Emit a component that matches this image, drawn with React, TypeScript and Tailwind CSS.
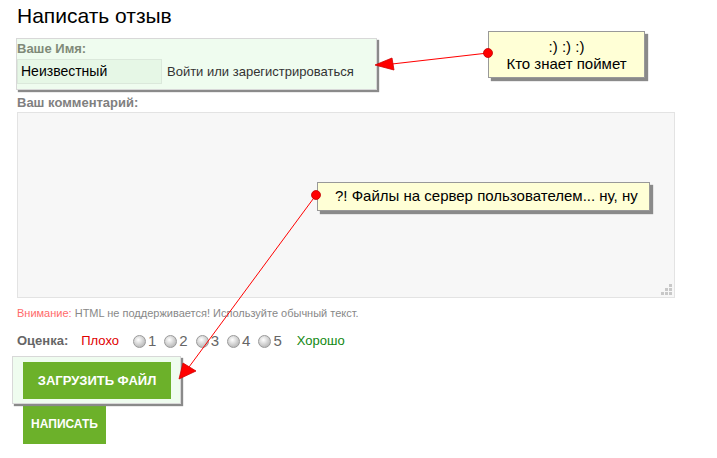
import React from "react";

const font = { fontFamily: '"Liberation Sans", Arial, sans-serif' };

const Radio: React.FC<{ n: number }> = ({ n }) => (
  <label className="flex items-center mr-[8px]">
    <span className="w-[13px] h-[13px] rounded-full border border-[#9a9a9a] bg-[radial-gradient(circle_at_40%_35%,#ffffff,#c8c8c8_60%,#a8a8a8)]"></span>
    <span className="ml-[2px] text-[15px] text-[#666]">{n}</span>
  </label>
);

export default function App() {
  return (
    <div className="relative w-[717px] h-[458px] bg-white overflow-hidden" style={font}>
      <div className="pl-[17px] pt-[4px] flex flex-col">
        <h1 className="text-[21px] leading-[24px] text-black">Написать отзыв</h1>

        {/* name block */}
        <div className="mt-[10px] -ml-[1px] w-[361px] border border-[#d8d8d8] bg-[#effcef] shadow-[2px_2px_1px_#8a8a8a] pb-[5px]">
          <div className="text-[13px] leading-[20px] font-bold text-[#7f8a78]">Ваше Имя:</div>
          <div className="flex items-center">
            <div className="w-[145px] h-[25px] border border-[#dbe8db] bg-[#e6f7e6] flex items-center pl-[3px] text-[14px] text-black">
              Неизвестный
            </div>
            <span className="ml-[5px] text-[13px] text-[#333]">Войти или зарегистрироваться</span>
          </div>
        </div>

        <div className="mt-[4px] text-[13px] leading-[18px] font-bold text-[#808080]">Ваш комментарий:</div>
        <div className="relative w-[658px] h-[186px] border border-[#e3e3e3] bg-[#f7f7f7]">
          <div className="absolute right-[2px] bottom-[2px] grid grid-cols-3 gap-[1px] w-[11px]">
            <span></span><span></span><span className="w-[3px] h-[3px] bg-[#c8c8c8]"></span>
            <span></span><span className="w-[3px] h-[3px] bg-[#c8c8c8]"></span><span className="w-[3px] h-[3px] bg-[#c8c8c8]"></span>
            <span className="w-[3px] h-[3px] bg-[#c8c8c8]"></span><span className="w-[3px] h-[3px] bg-[#c8c8c8]"></span><span className="w-[3px] h-[3px] bg-[#c8c8c8]"></span>
          </div>
        </div>

        <div className="mt-[8px] text-[11px] leading-[14px] text-[#888]">
          <span className="text-[#ff6a6a]">Внимание:</span> HTML не поддерживается! Используйте обычный текст.
        </div>

        <div className="mt-[13px] flex items-center text-[13px] leading-[16px]">
          <span className="font-bold text-[#666]">Оценка:</span>
          <span className="ml-[13px] mr-[14px] text-[#e00000]">Плохо</span>
          {[1, 2, 3, 4, 5].map((n) => (
            <Radio key={n} n={n} />
          ))}
          <span className="ml-[7px] text-[#118811]">Хорошо</span>
        </div>

        <div className="relative z-10 mt-[7px] -ml-[5px] w-[169px] border border-[#d8d8d8] bg-[#effcef] shadow-[2px_2px_1px_#8a8a8a] pl-[10px] pr-[9px] pt-[5px] pb-[4px]">
          <button className="w-[148px] h-[37px] bg-[#6cb12a] text-white font-bold text-[13px] uppercase">
            Загрузить файл
          </button>
        </div>
        <button className="w-[83px] h-[40px] bg-[#6cb12a] text-white font-bold text-[12px] ml-[6px]">
          НАПИСАТЬ
        </button>
      </div>

      {/* callouts */}
      <div className="absolute left-[488px] top-[31px] w-[157px] h-[47px] border border-[#999] bg-[#ffffd6] shadow-[3px_3px_1px_#8a8a8a] flex flex-col items-center justify-center text-[15px] leading-[17px] text-black">
        <span>:) :) :)</span>
        <span>Кто знает поймет</span>
      </div>
      <div className="absolute left-[317px] top-[182px] w-[333px] h-[29px] border border-[#999] bg-[#ffffd6] shadow-[3px_3px_1px_#8a8a8a] flex items-center pl-[17px] text-[15px] text-black">
        ?! Файлы на сервер пользователем... ну, ну
      </div>

      <svg className="absolute inset-0 pointer-events-none z-20" width="717" height="458">
        <line x1="488" y1="53" x2="392" y2="64" stroke="#ff0000" strokeWidth="1.2" />
        <polygon points="375,65 392,58 394,70" fill="#ff0000" stroke="#d00000" strokeWidth="0.8" />
        <circle cx="488" cy="53" r="4.5" fill="#ff0000" stroke="#c00000" strokeWidth="0.8" />
        <line x1="316" y1="195" x2="189" y2="367" stroke="#ff0000" strokeWidth="1" />
        <polygon points="179,379 183,363 196,371" fill="#ff0000" stroke="#d00000" strokeWidth="0.8" />
        <circle cx="316" cy="195" r="4.5" fill="#ff0000" stroke="#c00000" strokeWidth="0.8" />
      </svg>
    </div>
  );
}
